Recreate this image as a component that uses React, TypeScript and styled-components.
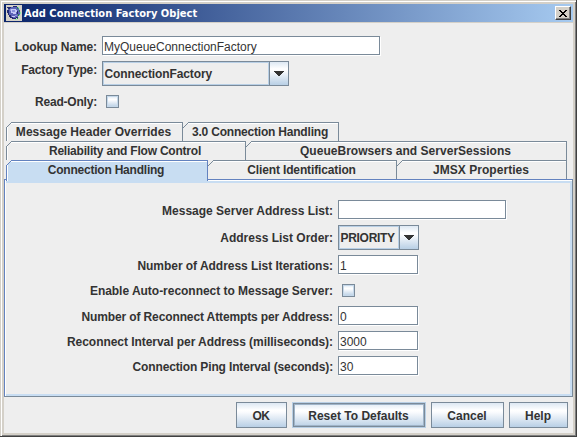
import React from "react";
import styled, { createGlobalStyle, css } from "styled-components";

const color = {
  face: "#eeeeee",
  text: "#333333",
  edge: "#7a8a99",
  active: "#6382bf",
  glow: "#c8ddf2",
  frame: "#d4d0c8",
};

const steel = css`
  background: linear-gradient(#dde8f3 0%, #ffffff 30%, #fbfcfe 38%, #b8cfe5 100%);
`;

const GlobalStyle = createGlobalStyle`
  * { box-sizing: border-box; }
  body { margin: 0; overflow: hidden; }
  button, input { font: inherit; color: inherit; margin: 0; border-radius: 0; outline: none; }
`;

const Dialog = styled.div`
  width: 577px;
  height: 437px;
  padding: 3px 2px 3px 3px;
  display: flex;
  background: ${color.frame};
  border-right: 1px solid #404040;
  border-bottom: 1px solid #404040;
  box-shadow: inset 1px 1px 0 ${color.frame}, inset 2px 2px 0 #ffffff, inset -1px -1px 0 #808080;
  font: bold 12px/14px "Liberation Sans", Arial, sans-serif;
  color: ${color.text};
`;

const Client = styled.div`
  width: 569px;
  height: 429px;
  margin: 1px;
  display: flex;
  flex-direction: column;
  background: ${color.face};
`;

const TitleBar = styled.header`
  height: 18px;
  flex: none;
  display: flex;
  align-items: center;
  padding: 0 2px;
  background: linear-gradient(90deg, #0a246a, #a6caf0);
  box-shadow: 0 1px 0 ${color.frame};
  color: #ffffff;
`;

const Title = styled.span`
  flex: 1;
  margin-left: 2px;
  padding-top: 2px;
  font: bold 11px/14px "DejaVu Sans Condensed", "DejaVu Sans", Tahoma, sans-serif;
  font-stretch: condensed;
  letter-spacing: 0.02px;
  white-space: nowrap;
`;

const CloseButton = styled.button`
  width: 16px;
  height: 14px;
  padding: 0;
  display: flex;
  justify-content: center;
  align-items: center;
  border: 1px solid;
  border-color: #ffffff #404040 #404040 #ffffff;
  background: ${color.frame};
  box-shadow: inset -1px -1px 0 #808080;
`;

const Text = styled.span<{ $track?: number }>`
  display: block;
  white-space: nowrap;
  letter-spacing: ${(p) => p.$track ?? 0}px;
`;

const Row = styled.div<{ $height: number; $gap?: number }>`
  display: flex;
  align-items: flex-start;
  height: ${(p) => p.$height}px;
  margin-bottom: ${(p) => p.$gap ?? 6}px;
`;

const Caption = styled.label<{ $width: number; $drop: number; $track?: number }>`
  width: ${(p) => p.$width}px;
  padding-top: ${(p) => p.$drop}px;
  margin-right: 5px;
  flex: none;
  display: flex;
  justify-content: flex-end;
  white-space: nowrap;
  letter-spacing: ${(p) => p.$track ?? 0}px;
`;

const Field = styled.input<{ $width: number }>`
  width: ${(p) => p.$width}px;
  height: 19px;
  padding: 2px 0 0 1px;
  border: 1px solid ${color.edge};
  background: #ffffff;
  box-shadow: 1px 1px 0 #ffffff;
  font-weight: normal;
  line-height: 14px;
`;

const ComboBox = styled.div<{ $width: number }>`
  width: ${(p) => p.$width}px;
  height: 25px;
  display: flex;
  border: 1px solid ${color.edge};
`;

const ComboValue = styled.div`
  flex: 1;
  min-width: 0;
  padding: 4px 0 0 0.5px;
  border: 1px solid #b8cfe5;
`;

const ComboArrow = styled.div`
  width: 19px;
  flex: none;
  display: flex;
  align-items: center;
  justify-content: center;
  border-left: 1px solid ${color.edge};
  ${steel}
`;

const CheckBox = styled.button`
  width: 13px;
  height: 13px;
  margin-left: 4px;
  padding: 0;
  border: 1px solid ${color.edge};
  box-shadow: inset 0 0 0 1px #c5d8ea;
  ${steel}
`;

const ObjectForm = styled.section`
  height: 100px;
  flex: none;
  padding-top: 14px;
`;

const Tabs = styled.nav`
  flex: none;
  padding: 0 6px 0 2px;
`;

const TabRow = styled.div`
  display: flex;
  height: 19px;
`;

const Tab = styled.div<{ $width: number; $selected?: boolean }>`
  position: relative;
  width: ${(p) => p.$width}px;
  height: ${(p) => (p.$selected ? 21 : 19)}px;
  padding: 2px 1px 0 0;
  display: flex;
  justify-content: center;
  border-top: 1px solid ${(p) => (p.$selected ? color.active : color.edge)};
  border-right: 1px solid ${(p) => (p.$selected ? color.active : color.edge)};
  background: ${(p) => (p.$selected ? color.glow : color.face)};
  box-shadow: inset 0 1px 0 #ffffff;

  &:first-child {
    padding-right: 2px;
    border-left: 1px solid ${(p) => (p.$selected ? color.active : color.edge)};
    box-shadow: inset 1px 1px 0 #ffffff;
  }
`;

const CornerSvg = styled.svg<{ $first?: boolean }>`
  position: absolute;
  top: -1px;
  left: ${(p) => (p.$first ? -1 : 0)}px;
`;

const TabPanel = styled.section`
  height: 218px;
  flex: none;
  padding: 20px 0 0;
  border: 1px solid ${color.edge};
  border-top-color: ${color.active};
  border-left-color: ${color.active};
  background: ${color.face};
  box-shadow: inset 1px 1px 0 #ffffff, inset 0 3px 0 ${color.glow}, inset -2px -2px 0 ${color.glow};
`;

const Footer = styled.footer`
  display: flex;
  justify-content: flex-end;
  padding: 5px 5px 0 0;
  gap: 5px;
`;

const PushButton = styled.button<{ $width: number; $default?: boolean }>`
  width: ${(p) => p.$width}px;
  height: 26px;
  padding: 2px 1px 0 0;
  display: flex;
  justify-content: center;
  align-items: center;
  border: 1px solid ${color.edge};
  ${steel}
  ${(p) =>
    p.$default &&
    css`
      border-color: #b8cfe5;
      box-shadow: inset 0 0 0 1px ${color.edge}, inset 0 0 0 2px #9fb4c9;
    `}
`;

function TitleIcon() {
  return (
    <svg width="16" height="16" viewBox="0 0 16 16" shapeRendering="crispEdges">
      <path fill="#d4d0c8" d="M0 0h16v16H0z" />
      <path fill="#5c64b8" d="M4 2h7v1h2v2h1v5h-2v2h-2v1H6v-1H4v-2H3V7H2V4h2z" />
      <path fill="#232a70" d="M1 2h4v1H4v1H2V3H1zM7 1h4v1H7zM1 5h2v3H1zM2 8h1v2h2v2h2v1h3v1H6v-1H4v-1H3v-2H2zM10 12h2v1h-2zM11 6h1v3h-1z" />
      <path fill="#c4caf8" d="M5 4h5v1h1v2h-1v2H7V8H5zM6 11h3v1H6z" />
      <path fill="#8b93dc" d="M6 5h3v2H6zM4 4h1v2H4zM9 10h2v1H9z" />
      <path fill="#2e7f58" d="M11 2h1v2h-1zM13 5h1v2h-1zM12 9h1v2h-1zM11 13h1v1h-1z" />
      <path fill="#8df3aa" d="M12 2h1v1h-1zM13 4h1v1h-1zM14 7h1v2h-1zM13 10h1v1h-1zM12 12h1v1h-1zM9 14h2v1H9z" />
    </svg>
  );
}

function Arrow() {
  return (
    <svg width="10" height="5" viewBox="0 0 10 5" shapeRendering="crispEdges">
      <path fill="#333" d="M0 0h10v1H9v1H8v1H7v1H6v1H4V4H3V3H2V2H1V1H0z" />
    </svg>
  );
}

function Corner({ first, selected }: { first?: boolean; selected?: boolean }) {
  return (
    <CornerSvg $first={first} width="6" height="6" viewBox="0 0 6 6" shapeRendering="crispEdges">
      <path fill={color.face} d="M0 0h6v1H5v1H4v1H3v1H2v1H1v1H0z" />
      <path
        fill={selected ? color.active : color.edge}
        d="M5 0h1v1H5zM4 1h1v1H4zM3 2h1v1H3zM2 3h1v1H2zM1 4h1v1H1zM0 5h1v1H0z"
      />
    </CornerSvg>
  );
}

function Combo({ width, value, track }: { width: number; value: string; track: number }) {
  return (
    <ComboBox $width={width}>
      <ComboValue>
        <Text $track={track}>{value}</Text>
      </ComboValue>
      <ComboArrow>
        <Arrow />
      </ComboArrow>
    </ComboBox>
  );
}

type TabItem = { label: string; width: number; track: number; selected?: boolean };

const tabRows: TabItem[][] = [
  [
    { label: "Message Header Overrides", width: 177, track: 0.05 },
    { label: "3.0 Connection Handling", width: 156, track: -0.2 },
  ],
  [
    { label: "Reliability and Flow Control", width: 240, track: -0.21 },
    { label: "QueueBrowsers and ServerSessions", width: 321, track: 0.03 },
  ],
  [
    { label: "Connection Handling", width: 202, track: -0.22, selected: true },
    { label: "Client Identification", width: 189, track: -0.13 },
    { label: "JMSX Properties", width: 170, track: 0.05 },
  ],
];

export default function App() {
  return (
    <Dialog>
      <GlobalStyle />
      <Client>
        <TitleBar>
          <TitleIcon />
          <Title>Add Connection Factory Object</Title>
          <CloseButton aria-label="Close">
            <svg width="8" height="7" viewBox="0 0 8 7" shapeRendering="crispEdges">
              <path fill="#000" d="M0 0h2v1h1v1h2V1h1V0h2v1H7v1H6v1H5v1h1v1h1v1h1v1H6V6H5V5H3v1H2v1H0V6h1V5h1V4h1V3H2V2H1V1H0z" />
            </svg>
          </CloseButton>
        </TitleBar>

        <ObjectForm>
          <Row $height={19}>
            <Caption $width={93} $drop={4} $track={-0.1}>Lookup Name:</Caption>
            <Field $width={278} defaultValue="MyQueueConnectionFactory" />
          </Row>
          <Row $height={25} $gap={9}>
            <Caption $width={93} $drop={2} $track={-0.15}>Factory Type:</Caption>
            <Combo width={187} value="ConnectionFactory" track={-0.1} />
          </Row>
          <Row $height={13}>
            <Caption $width={93} $drop={0} $track={-0.2}>Read-Only:</Caption>
            <CheckBox aria-label="Read-Only" />
          </Row>
        </ObjectForm>

        <Tabs>
          {tabRows.map((row) => (
            <TabRow key={row[0].label}>
              {row.map((tab, i) => (
                <Tab key={tab.label} $width={tab.width} $selected={tab.selected}>
                  <Corner first={i === 0} selected={tab.selected} />
                  <Text $track={tab.track}>{tab.label}</Text>
                </Tab>
              ))}
            </TabRow>
          ))}
        </Tabs>

        <TabPanel>
          <Row $height={19}>
            <Caption $width={328} $drop={4}>Message Server Address List:</Caption>
            <Field $width={168} />
          </Row>
          <Row $height={25} $gap={5}>
            <Caption $width={328} $drop={6}>Address List Order:</Caption>
            <Combo width={81} value="PRIORITY" track={-0.3} />
          </Row>
          <Row $height={19} $gap={10}>
            <Caption $width={328} $drop={4} $track={-0.04}>Number of Address List Iterations:</Caption>
            <Field $width={80} defaultValue="1" />
          </Row>
          <Row $height={13} $gap={9}>
            <Caption $width={328} $drop={0} $track={-0.03}>Enable Auto-reconnect to Message Server:</Caption>
            <CheckBox aria-label="Enable Auto-reconnect" />
          </Row>
          <Row $height={19}>
            <Caption $width={328} $drop={4} $track={-0.12}>Number of Reconnect Attempts per Address:</Caption>
            <Field $width={80} defaultValue="0" />
          </Row>
          <Row $height={19}>
            <Caption $width={328} $drop={4} $track={-0.05}>Reconnect Interval per Address (milliseconds):</Caption>
            <Field $width={80} defaultValue="3000" />
          </Row>
          <Row $height={19}>
            <Caption $width={328} $drop={4} $track={-0.14}>Connection Ping Interval (seconds):</Caption>
            <Field $width={80} defaultValue="30" />
          </Row>
        </TabPanel>

        <Footer>
          <PushButton $width={51}><Text $track={-0.5}>OK</Text></PushButton>
          <PushButton $width={134} $default><Text>Reset To Defaults</Text></PushButton>
          <PushButton $width={73}><Text>Cancel</Text></PushButton>
          <PushButton $width={59}><Text>Help</Text></PushButton>
        </Footer>
      </Client>
    </Dialog>
  );
}
